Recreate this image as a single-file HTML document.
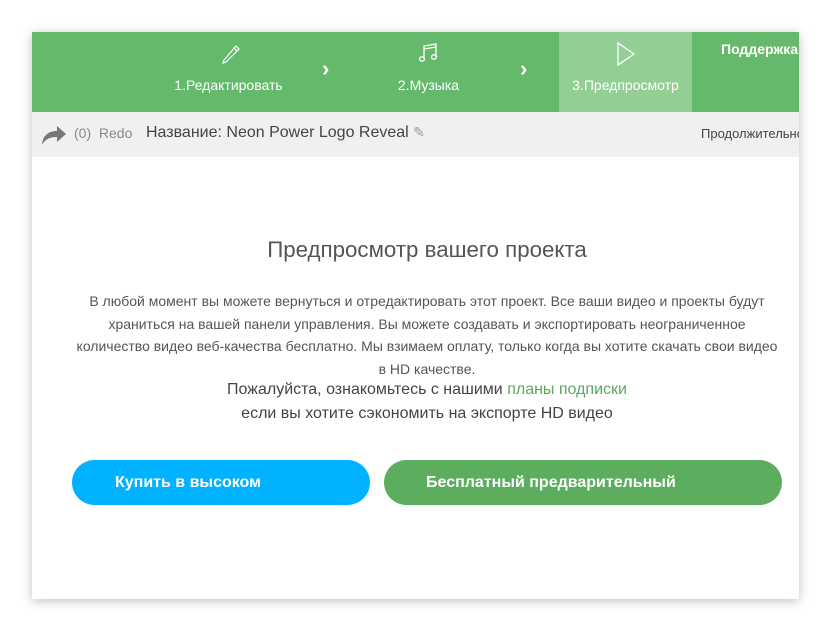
<!DOCTYPE html>
<html><head><meta charset="utf-8"><style>
*{margin:0;padding:0;box-sizing:border-box}
body{width:831px;height:631px;background:#fff;font-family:"Liberation Sans","Noto Sans CJK SC",sans-serif;position:relative;overflow:hidden}
.box{position:absolute;left:32px;top:32px;width:767px;height:567px;background:#fff;box-shadow:0 2px 10px rgba(0,0,0,.25);overflow:hidden}
.hdr{position:absolute;left:0;top:0;width:767px;height:80px;background:#65b96a}
.step{position:absolute;top:0;height:80px;color:#fff;font-size:14px;text-align:center}
.step .lbl{position:absolute;top:45px;width:100%;text-align:center}
.arrow{position:absolute;top:24px;color:#fff;font-size:22px;font-weight:bold}
.bar{position:absolute;left:0;top:80px;width:767px;height:45px;background:#f0f0f0;font-size:16px;color:#444}
h1{position:absolute;top:205px;left:0;width:790px;text-align:center;font-weight:normal;font-size:22.3px;color:#555}
.p1{position:absolute;top:258px;left:0;width:790px;text-align:center;font-size:14px;line-height:22.7px;color:#555;white-space:nowrap}
.p2{position:absolute;top:346px;left:0;width:790px;text-align:center;font-size:16px;line-height:24px;color:#444}
.btn{position:absolute;top:428px;height:45px;border-radius:23px;color:#fff;font-size:16px;line-height:45px;font-weight:bold}
</style></head><body>
<div class="box">
<div class="hdr">
 <div class="step" style="left:130px;width:133px">
  <svg style="position:absolute;left:57px;top:10px" width="22" height="22" viewBox="0 0 22 22" fill="none" stroke="#fff" stroke-width="1.2"><path d="M5 18 L4 21 L7 20 L20 7 L17 4 Z M15 6 L18 9"/></svg>
  <div class="lbl">1.Редактировать</div></div>
 <div class="arrow" style="left:290px">›</div>
 <div class="step" style="left:330px;width:133px">
  <svg style="position:absolute;left:55px;top:9px" width="22" height="24" viewBox="0 0 22 24" fill="none" stroke="#fff" stroke-width="1.3"><path d="M7 18 V5 L19 3 V16"/><ellipse cx="5" cy="18" rx="2.5" ry="2.2"/><ellipse cx="17" cy="16" rx="2.5" ry="2.2"/><path d="M7 8 L19 6"/></svg>
  <div class="lbl">2.Музыка</div></div>
 <div class="arrow" style="left:488px">›</div>
 <div class="step" style="left:527px;width:133px;background:#93cf95">
  <svg style="position:absolute;left:56px;top:9px" width="22" height="26" viewBox="0 0 22 26" fill="none" stroke="#fff" stroke-width="1.3"><path d="M3 2 L19 13 L3 24 Z"/></svg>
  <div class="lbl">3.Предпросмотр</div></div>
 <div style="position:absolute;left:689px;top:9px;color:#fff;font-size:14px;font-weight:bold;white-space:nowrap">Поддержка</div>
</div>
<div class="bar">
 <svg style="position:absolute;left:9px;top:12px" width="26" height="22" viewBox="0 0 26 22"><path d="M1 21 C2 10 9 7 16 7 V2 L25 10 L16 18 V13 C9 13 4 15 1 21 Z" fill="#777"/></svg>
 <div style="position:absolute;left:42px;top:13px;font-size:14px;color:#888">(0)&nbsp; Redo</div>
 <div style="position:absolute;left:114px;top:12px">Название: Neon Power Logo Reveal <span style="color:#999;font-size:14px">✎</span></div>
 <div style="position:absolute;left:669px;top:14px;font-size:13px;white-space:nowrap">Продолжительность</div>
</div>
<h1>Предпросмотр вашего проекта</h1>
<div class="p1">В любой момент вы можете вернуться и отредактировать этот проект. Все ваши видео и проекты будут<br>храниться на вашей панели управления. Вы можете создавать и экспортировать неограниченное<br>количество видео веб-качества бесплатно. Мы взимаем оплату, только когда вы хотите скачать свои видео<br>в HD качестве.</div>
<div class="p2">Пожалуйста, ознакомьтесь с нашими <span style="color:#5aa95e">планы подписки</span><br>если вы хотите сэкономить на экспорте HD видео</div>
<div class="btn" style="left:40px;width:298px;background:#00b2ff;padding-left:43px">Купить в высоком</div>
<div class="btn" style="left:352px;width:398px;background:#5cae5e;padding-left:42px">Бесплатный предварительный</div>
</div>
</body></html>
